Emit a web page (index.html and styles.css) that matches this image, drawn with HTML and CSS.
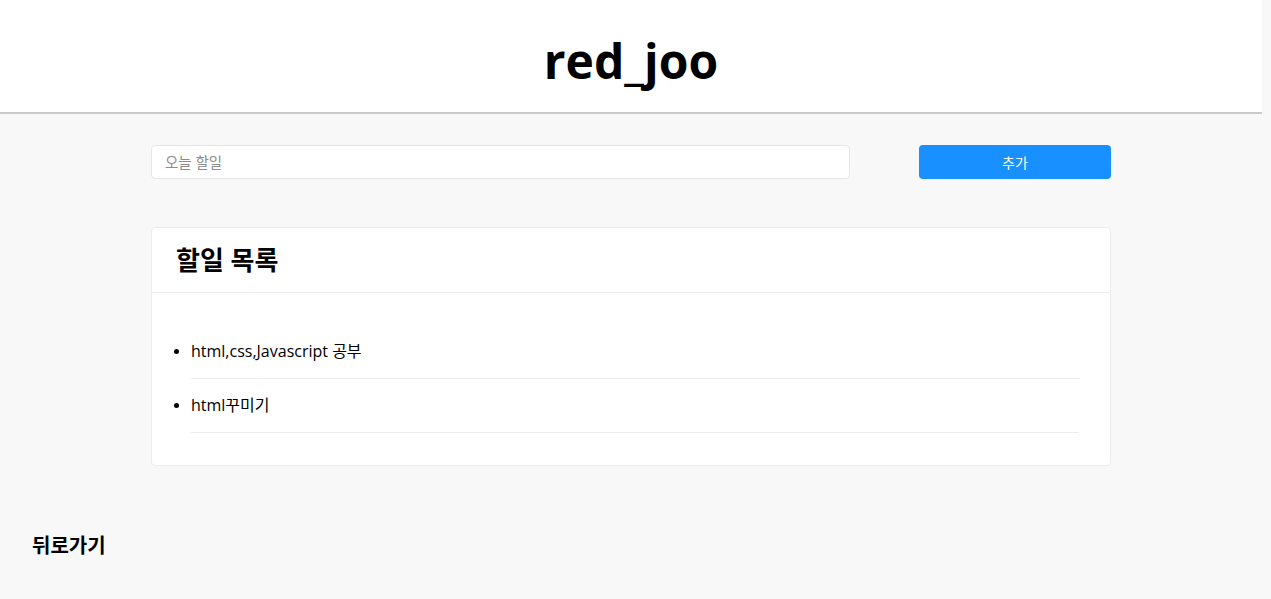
FILE: index.html
```html
<!DOCTYPE html>
<html lang="ko">
<head>
<meta charset="utf-8">
<title>red_joo</title>
<link rel="stylesheet" href="styles.css">
</head>
<body>
<div class="page">
  <header class="site-header">
    <h1 class="site-title">red_joo</h1>
  </header>
  <main class="main">
    <div class="container">
      <form class="todo-form">
        <input class="todo-input" type="text" placeholder="오늘 할일">
        <button class="todo-btn" type="button">추가</button>
      </form>
      <section class="card">
        <div class="card-head">
          <h2 class="card-title">할일 목록</h2>
        </div>
        <div class="card-body">
          <ul class="todo-list">
            <li class="todo-item">html,css,Javascript 공부</li>
            <li class="todo-item">html꾸미기</li>
          </ul>
        </div>
      </section>
    </div>
    <div class="back">뒤로가기</div>
  </main>
</div>
</body>
</html>
```
FILE: styles.css
```css
* { box-sizing: border-box; }
html, body { margin: 0; padding: 0; }
body {
  font-family: "Open Sans", "Noto Sans CJK KR", sans-serif;
  background: #f8f8f8;
  color: #000;
  height: 599px;
  overflow: hidden;
}
.page {
  padding-right: 9px;
}
.site-header {
  height: 114px;
  background: #fff;
  border-bottom: 2px solid #cacaca;
  display: flex;
  align-items: center;
  justify-content: center;
}
.site-title {
  margin: 0;
  font-size: 48px;
  font-weight: 700;
  line-height: 1;
  padding-top: 10px;
}
.main {
  padding-top: 31px;
}
.container {
  width: 960px;
  margin: 0 auto;
}
.todo-form {
  display: grid;
  grid-template-columns: 1fr 192px;
  column-gap: 69px;
  margin: 0;
}
.todo-input {
  height: 34px;
  border: 1px solid #e6e6e6;
  border-radius: 4px;
  background: #fff;
  padding: 0 13px;
  font-family: "Open Sans", "Noto Sans CJK KR", sans-serif;
  font-size: 14.5px;
  color: #333;
  outline: none;
}
.todo-input::placeholder { color: #8c8c8c; }
.todo-btn {
  height: 34px;
  border: none;
  border-radius: 4px;
  background: #1890ff;
  color: #fff;
  font-family: "Open Sans", "Noto Sans CJK KR", sans-serif;
  font-size: 14px;
  cursor: pointer;
}
.card {
  margin-top: 48px;
  background: #fff;
  border: 1px solid #ececec;
  border-radius: 4px;
}
.card-head {
  height: 65px;
  border-bottom: 1px solid #ececec;
  display: flex;
  align-items: center;
  padding: 0 24px;
}
.card-title {
  margin: 0;
  font-size: 26px;
  font-weight: 700;
  padding-bottom: 2px;
}
.card-body {
  padding: 32px 31px 32px 32px;
}
.todo-list {
  margin: 0;
  padding-left: 7px;
}
.todo-item {
  font-size: 16px;
  line-height: 22px;
  padding: 15px 0 16px;
  border-bottom: 1px solid #ececec;
}
.todo-item::marker { font-size: 14px; }
.back {
  margin-top: 64px;
  padding-left: 32px;
  font-size: 20px;
  font-weight: 700;
}
```
